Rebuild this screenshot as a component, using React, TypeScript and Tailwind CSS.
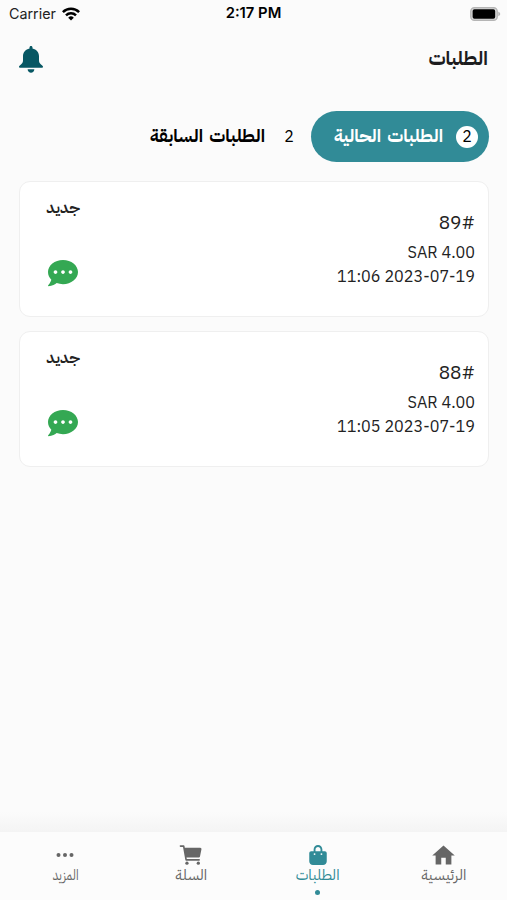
import type { ReactNode } from "react";
import { FaCommentDots } from "react-icons/fa";
import { FaBagShopping } from "react-icons/fa6";
import { IoCart } from "react-icons/io5";
import { MdHome } from "react-icons/md";

interface Order {
  id: number;
  total: string;
  date: string;
  status: string;
}

const orders: Order[] = [
  { id: 89, total: "SAR 4.00", date: "2023-07-19 11:06", status: "جديد" },
  { id: 88, total: "SAR 4.00", date: "2023-07-19 11:05", status: "جديد" },
];

function StatusBar() {
  return (
    <div dir="ltr" className="grid grid-cols-3 items-center h-7 pb-px pl-[9px] pr-[6px] font-['Inter',sans-serif] text-black">
      <div className="flex items-center gap-[6px]">
        <span className="text-[14.3px] text-[#222]">Carrier</span>
        <svg width="18" height="14" viewBox="0 0 18 14" fill="none" stroke="#000" strokeWidth="2.5">
          <path d="M0.9 5.2a11.5 11.5 0 0 1 16.2 0" />
          <path d="M4 8.4a7.1 7.1 0 0 1 10 0" />
          <path d="M9 13.6 6.2 10.7a4 4 0 0 1 5.6 0z" fill="#000" stroke="none" />
        </svg>
      </div>
      <span className="pr-[3px] text-center text-[14.8px] font-semibold">2:17 PM</span>
      <svg className="justify-self-end" width="31" height="14" viewBox="0 0 31 14">
        <rect x="0.8" y="0.7" width="26.4" height="12.6" rx="3.6" fill="#ddd" stroke="#b5b5b5" strokeWidth="1.4" />
        <rect x="2.6" y="2.3" width="22.6" height="9.4" rx="1.8" fill="#000" />
        <path d="M28.3 4.8v4.4c1.2-.4 1.9-1.2 1.9-2.2s-.7-1.8-1.9-2.2z" fill="#b5b5b5" />
      </svg>
    </div>
  );
}

function BellIcon() {
  return (
    <svg width="24" height="27" viewBox="0 0 24 27" className="text-[#075763]" fill="currentColor">
      <path d="M12 0c-.9 0-1.5.7-1.5 1.6v.9C6.6 3.3 4 6.4 4 10.2v4.3c0 2-1 3.3-2.6 4.5-.9.7-1.4 1.2-1.4 1.8 0 .5.3.9.9.9h22.2c.6 0 .9-.4.9-.9 0-.6-.5-1.1-1.4-1.8-1.6-1.2-2.6-2.5-2.6-4.5v-4.3c0-3.8-2.6-6.9-6.5-7.7v-.9C13.5.7 12.9 0 12 0z" />
      <path d="M8.6 23.2h6.8c-.2 2-1.6 3.5-3.4 3.5s-3.2-1.5-3.4-3.5z" />
    </svg>
  );
}

function OrderCard({ order }: { order: Order }) {
  return (
    <div className="flex justify-between h-[136px] bg-white border border-[#efefef] rounded-[11px] pr-[13px] text-[#222]">
      <div className="pt-[27px]">
        <p className="text-[19px] leading-[28px]">{order.id}#</p>
        <p className="mt-1 text-[16.2px] leading-[24px]">{order.total}</p>
        <p className="text-[16.2px] leading-[24px]">{order.date}</p>
      </div>
      <div className="flex flex-col items-center w-[86px] pt-[14px]">
        <p className="text-[16px] leading-[24px] font-semibold">{order.status}</p>
        <FaCommentDots size={30} className="mt-[38px] mr-px text-[#34a853]" />
      </div>
    </div>
  );
}

interface NavItemProps {
  label: string;
  active?: boolean;
  labelClass?: string;
  children: ReactNode;
}

function NavItem({ label, active, labelClass = "", children }: NavItemProps) {
  return (
    <div className={`flex flex-col items-center flex-1 pt-[10px] ${active ? "text-[#318b97]" : "text-[#666]"}`}>
      <div className="flex items-center justify-center h-[26px]">{children}</div>
      <span className={`-mt-[2px] text-[15px] leading-[18px] ${labelClass}`}>{label}</span>
      {active && <span className="mt-[6px] w-[5px] h-[5px] rounded-full bg-[#318b97]" />}
    </div>
  );
}

export default function App() {
  return (
    <div
      dir="rtl"
      className="flex flex-col w-full h-[900px] overflow-hidden bg-[#fbfbfb] font-['IBM_Plex_Sans_Arabic','IBM_Plex_Sans','DejaVu_Sans_Condensed',sans-serif]"
    >
      <StatusBar />

      <header className="flex items-center justify-between h-[62px] px-[19px]">
        <h1 className="text-[19.3px] font-bold text-[#1c1c1e]">الطلبات</h1>
        <BellIcon />
      </header>

      <div className="flex items-center mt-[21px] px-[18px]">
        <div className="flex items-center h-[51px] w-[178px] pr-[11px] rounded-full bg-[#318b97]">
          <span className="flex items-center justify-center w-[22px] h-[22px] rounded-full bg-white text-[16px] text-black">2</span>
          <span className="mr-[13px] pb-[2px] text-[18px] [word-spacing:2px] font-bold text-white whitespace-nowrap">الطلبات الحالية</span>
        </div>
        <div className="flex items-center h-[51px] pr-[11px]">
          <span className="w-[22px] text-center text-[16px] text-black">2</span>
          <span className="mr-[13px] pb-[2px] text-[18px] [word-spacing:2px] font-bold text-black whitespace-nowrap">الطلبات السابقة</span>
        </div>
      </div>

      <main className="flex flex-col flex-1 gap-[14px] mt-[19px] pl-[19px] pr-[18px]">
        {orders.map((order) => (
          <OrderCard key={order.id} order={order} />
        ))}
      </main>

      <div className="h-5 bg-linear-to-b from-[#fbfbfb] to-[#f4f4f4]" />
      <nav className="flex h-[68px] pl-[2px] bg-[#fcfcfc]">
        <NavItem label="الرئيسية">
          <MdHome size={27} />
        </NavItem>
        <NavItem label="الطلبات" active>
          <FaBagShopping size={20} />
        </NavItem>
        <NavItem label="السلة">
          <IoCart size={26} />
        </NavItem>
        <NavItem label="المزيد" labelClass="scale-x-[0.78]">
          <svg width="18" height="4" viewBox="0 0 18 4" fill="currentColor">
            <circle cx="2.5" cy="2" r="2" />
            <circle cx="9" cy="2" r="2" />
            <circle cx="15.5" cy="2" r="2" />
          </svg>
        </NavItem>
      </nav>
    </div>
  );
}
